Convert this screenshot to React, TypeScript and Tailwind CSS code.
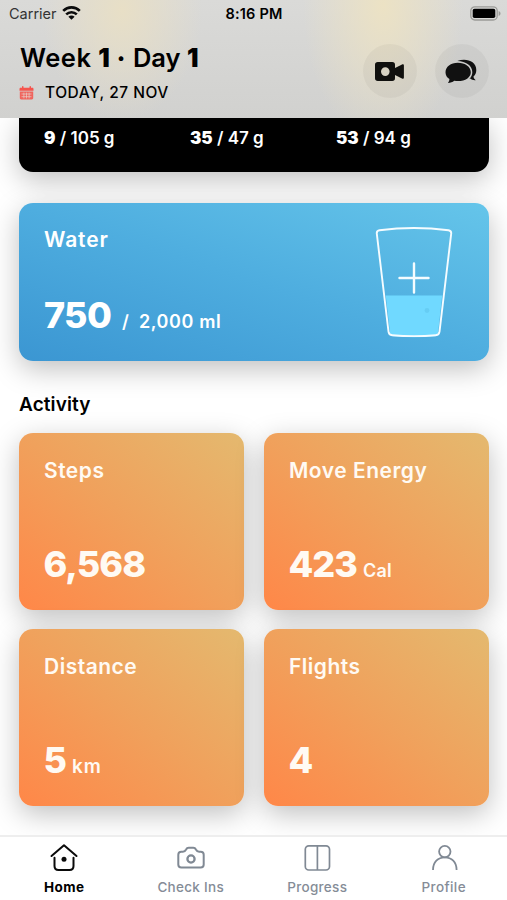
import type { ReactNode } from "react";

function WifiIcon() {
  return (
    <svg className="-mt-[2px] h-[14px] w-[19px]" viewBox="0 0 19 14" fill="none" stroke="#0b0b0b">
      <path d="M1.2 4.900C5.9.3 13.100.3 17.800 4.900" strokeWidth="2.700" />
      <path d="M4.200 8.400c3-2.900 7.600-2.900 10.600 0" strokeWidth="2.600" />
      <path d="M9.500 13.800 6.400 10.700c1.700-1.600 4.500-1.600 6.200 0z" fill="#0b0b0b" stroke="none" />
    </svg>
  );
}

function BatteryIcon() {
  return (
    <svg className="h-[15px] w-[31px]" viewBox="0 0 31 15">
      <rect x="0.8" y="0.8" width="26.400" height="13.200" rx="4" fill="none" stroke="#9b9b98" strokeWidth="1.300" />
      <rect x="2.700" y="2.700" width="22.600" height="9.400" rx="1.800" fill="#000" />
      <path d="M28.600 5v5c1.300-.5 1.900-1.400 1.900-2.500S29.900 5.500 28.600 5z" fill="#9b9b98" />
    </svg>
  );
}

function CalendarIcon() {
  return (
    <svg className="h-[14px] w-[15px]" viewBox="0 0 15 14">
      <path d="M.5 4.800V3c0-.8.5-1.200 1.200-1.200H3V.8c0-1 1.500-1 1.500 0v1h6v-1c0-1 1.500-1 1.500 0v1h1.300c.7 0 1.200.4 1.200 1.200v1.800z" fill="#f5544d" />
      <path d="M.8 5.600h13.400V12c0 .9-.5 1.400-1.300 1.400H2.100C1.300 13.400.8 12.900.8 12z" fill="#f0645d" />
      <path d="M2.500 8h10M2.500 10.700h10M4.900 6.600v5.800M7.500 6.600v5.800M10.100 6.600v5.800" stroke="#e6cfc9" strokeWidth=".7" />
    </svg>
  );
}

function VideoIcon() {
  return (
    <svg className="h-[19px] w-[29px]" viewBox="0 0 29 19">
      <path fillRule="evenodd" fill="#10100e" d="M2.800 0h14.500C19 0 20 1 20 2.700v3.400L27 2.400c1.100-.5 1.900 0 1.900 1.100v12c0 1.100-.8 1.600-1.900 1.100l-7-3.700v3.400C20 18 19 19 17.300 19H2.800C1.100 19 0 18 0 16.300V2.700C0 1 1.100 0 2.800 0zM10.300 5.300a4.300 4.300 0 1 0 0 8.600 4.300 4.300 0 0 0 0-8.600z" />
    </svg>
  );
}

function ChatIcon() {
  return (
    <svg className="h-[25px] w-[32px]" viewBox="0 0 32 25">
      <path d="M12.800 3.800C5.800 3.800.5 7.900.5 13.200c0 2.900 1.400 5.200 3.900 6.900.1 1.500-.5 2.700-1.500 3.900 2.600 0 4.700-.9 6.300-2.200 9.300 1.500 16.600-2.500 16.600-8.600 0-5.300-5.700-9.400-13-9.400z" fill="#111" />
      <path d="M12.300 2C20.500-1.200 31.300 1.600 31.300 11c0 2.700-1 4.900-2.800 6.600 0 1.500.9 2.700 2.200 3.600-2.200.2-4.100-.4-5.400-1.600l-1 .2c2.100-1.800 3-4 3-6.600C27.300 6.400 21 2.500 12.300 2z" fill="#111" />
    </svg>
  );
}

function GlassIcon() {
  return (
    <svg className="mt-px h-[112px] w-[78px]" viewBox="0 0 78 112" fill="none">
      <path d="M10.800 69.500h56.400L63 107q-.5 3-3 3.200-21 2-41.500 0-3-.2-3.500-3.200z" fill="#70d9ff" />
      <circle cx="52" cy="84.500" r="2.400" fill="#66cdf4" />
      <path d="M4.500 4.200Q39-.2 73.500 4.200q3 .4 2.700 3.400L64.500 105.700q-.4 3.300-3.700 3.500-21.800 1.800-43.600 0-3.300-.2-3.700-3.500L1.800 7.600Q1.500 4.600 4.500 4.200z" stroke="#f5fcff" strokeWidth="1.900" />
      <path d="M39 37.500v29M24.500 52h29" stroke="#f5fcff" strokeWidth="2.400" strokeLinecap="round" />
    </svg>
  );
}

function HomeIcon() {
  return (
    <svg className="size-7" viewBox="0 0 28 28" fill="none" stroke="#0a0a0a" strokeWidth="2" strokeLinecap="round" strokeLinejoin="round">
      <path d="M1.500 13 14 2.300l12.500 10.700M4.500 14.700v8.300q0 4 4 4h11q4 0 4-4v-8.300" />
      <circle cx="14" cy="16.300" r="2.500" fill="#0a0a0a" stroke="none" />
    </svg>
  );
}

function CameraIcon() {
  return (
    <svg className="size-7" viewBox="0 0 28 28" fill="none" stroke="#808994" strokeWidth="2" strokeLinejoin="round">
      <path d="M4.300 8.700h1.600c1.900 0 2.400-.7 3.200-2.200.6-1.300 1.300-1.800 2.600-1.800h4.600c1.300 0 2 .5 2.600 1.800.8 1.500 1.300 2.200 3.200 2.200h1.600c2 0 3 1 3 3v9.800c0 2-1 3-3 3H4.300c-2 0-3-1-3-3v-9.800c0-2 1-3 3-3z" />
      <circle cx="14" cy="16" r="3.600" strokeWidth="2.300" />
    </svg>
  );
}

function ColumnsIcon() {
  return (
    <svg className="size-7" viewBox="0 0 28 28" fill="none" stroke="#808994" strokeWidth="1.700">
      <rect x="2.300" y="2.800" width="24.200" height="24.200" rx="3.500" />
      <path d="M14.400 2.800v24.200" />
    </svg>
  );
}

function ProfileIcon() {
  return (
    <svg className="size-7" viewBox="0 0 28 28" fill="none" stroke="#808994" strokeWidth="1.800">
      <circle cx="14.800" cy="8.600" r="5.700" />
      <path d="M3 27c0-8 5-12.600 11.800-12.600s11.800 4.600 11.800 12.600" />
    </svg>
  );
}

function ActivityCard({ title, value, unit }: { title: string; value: string; unit?: ReactNode }) {
  return (
    <section className="flex h-[177px] flex-col justify-between rounded-[14px] bg-[linear-gradient(38deg,#ff8748_0%,#f0a15c_50%,#e4b96f_100%)] px-[25px] pt-6 pb-[26px] text-[#fffaf3] shadow-[0_8px_28px_rgba(0,0,0,0.25)]">
      <h3 className="text-[21px] leading-7 font-semibold tracking-[0.5px]">{title}</h3>
      <div className="-ml-[0.5px] flex h-10 items-baseline">
        <span className="text-[36px] leading-10 font-extrabold tracking-[-1px]">{value}</span>
        {unit}
      </div>
    </section>
  );
}

function Tab({ icon, label, className }: { icon: ReactNode; label: string; className: string }) {
  return (
    <div className="flex flex-1 flex-col items-center gap-[5px] pt-[6px]">
      {icon}
      <span className={`text-[13.5px] leading-[22px] whitespace-nowrap ${className}`}>{label}</span>
    </div>
  );
}

export default function App() {
  return (
    <div className="flex h-[900px] w-[507px] flex-col overflow-hidden bg-white font-['Inter','Liberation_Sans',sans-serif] text-black">
      <header className="z-10 h-[118px] shrink-0 bg-[radial-gradient(ellipse_80px_110px_at_122px_10px,#e8dfc6_0%,transparent_100%),radial-gradient(ellipse_80px_140px_at_383px_5px,#ece2c4_0%,transparent_100%),linear-gradient(180deg,#dadad8,#d1d1cf)]">
        <div className="grid h-[27px] grid-cols-3 items-center pr-[6px] pl-[9px]">
          <div className="flex items-center gap-[5px]">
            <span className="text-[14.5px] text-[#333]">Carrier</span>
            <WifiIcon />
          </div>
          <span className="-ml-[2px] text-center text-[14.500px] font-semibold tracking-[0.2px] whitespace-nowrap">8:16 PM</span>
          <div className="flex justify-end"><BatteryIcon /></div>
        </div>
        <div className="flex justify-between pr-[18px] pl-5">
          <div className="pt-[15px]">
            <h1 className="flex items-center text-[25.5px] leading-8 font-semibold whitespace-nowrap">
              <span className="tracking-[0.500px]">Week <b>1</b></span>
              <span className="mr-[8px] ml-[7px] text-[15px] tracking-normal">•</span>
              <span>Day <b>1</b></span>
            </h1>
            <div className="mt-[7px] -ml-px flex items-center gap-[11px]">
              <CalendarIcon />
              <span className="text-[15.500px] leading-6 font-medium tracking-[0.5px]">TODAY, 27 NOV</span>
            </div>
          </div>
          <div className="flex gap-[18px] pt-[17px]">
            <button className="flex size-[54px] items-center justify-center rounded-full bg-black/4 pr-[2px]"><VideoIcon /></button>
            <button className="flex size-[54px] items-center justify-center rounded-full bg-black/4 pr-[2px]"><ChatIcon /></button>
          </div>
        </div>
      </header>

      <main className="min-h-0 flex-1 overflow-hidden pr-[18px] pl-[19px]">
        <section className="grid h-[54px] grid-cols-[146px_146px_1fr] rounded-b-[14px] bg-black pt-[8px] pl-[25px] text-[17px] leading-6 font-semibold text-white shadow-[0_8px_28px_rgba(0,0,0,0.25)]">
          <span><b>9</b> / 105 g</span>
          <span><b>35</b> / 47 g</span>
          <span><b>53</b> / 94 g</span>
        </section>

        <section className="mt-[31px] flex h-[158px] justify-between rounded-[14px] bg-[linear-gradient(18deg,#3b96d2_0%,#4eaddf_50%,#65c5ea_100%)] pt-[22px] pr-[36px] pb-[26px] pl-[25px] text-white shadow-[0_8px_28px_rgba(0,0,0,0.25)]">
          <div className="flex flex-col justify-between">
            <h2 className="mt-px text-[21px] leading-7 font-semibold tracking-[0.9px]">Water</h2>
            <div className="flex h-10 items-baseline">
              <span className="text-[36px] leading-10 font-extrabold tracking-[-0.7px]">750</span>
              <span className="ml-[11px] text-[18px] leading-none font-semibold">/</span>
              <span className="ml-[10px] text-[18px] leading-none font-semibold tracking-[0.6px]">2,000 ml</span>
            </div>
          </div>
          <GlassIcon />
        </section>

        <h2 className="mt-[30px] text-[19px] leading-7 font-semibold tracking-[0.1px]">Activity</h2>
        <div className="mt-[14px] grid grid-cols-2 gap-x-5 gap-y-[19px]">
          <ActivityCard title="Steps" value="6,568" />
          <ActivityCard title="Move Energy" value="423" unit={<span className="ml-[6px] text-[18px] leading-none font-semibold tracking-[0.3px]">Cal</span>} />
          <ActivityCard title="Distance" value="5" unit={<span className="ml-[6px] text-[19px] leading-none font-semibold tracking-[1px]">km</span>} />
          <ActivityCard title="Flights" value="4" />
        </div>
      </main>

      <nav className="z-10 flex h-[65px] shrink-0 border-t-2 border-[#eeeeee] bg-white pl-px">
        <Tab icon={<HomeIcon />} label="Home" className="font-bold tracking-[0.4px] text-black" />
        <Tab icon={<CameraIcon />} label="Check Ins" className="font-medium tracking-[0.3px] text-[#858c97]" />
        <Tab icon={<ColumnsIcon />} label="Progress" className="font-medium tracking-[0.3px] text-[#858c97]" />
        <Tab icon={<ProfileIcon />} label="Profile" className="font-medium tracking-[0.4px] text-[#858c97]" />
      </nav>
    </div>
  );
}
